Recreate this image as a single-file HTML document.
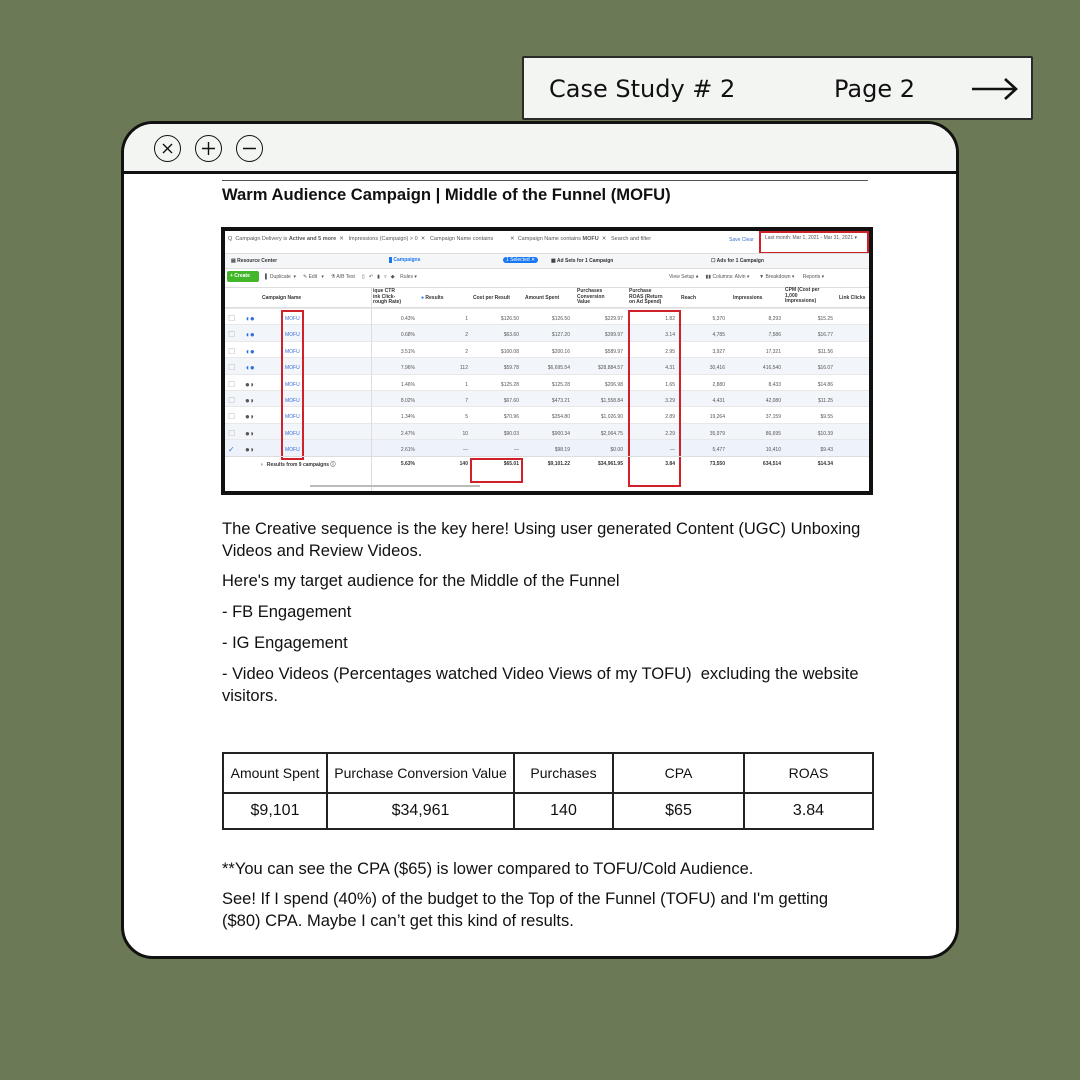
<!DOCTYPE html>
<html><head><meta charset="utf-8">
<style>
*{margin:0;padding:0;box-sizing:border-box}
body{width:1080px;height:1080px;background:#6b7956;position:relative;overflow:hidden;font-family:"Liberation Sans",Arial,sans-serif}
.hdr{position:absolute;left:522px;top:56px;width:511px;height:64px;background:#f3f5f3;border:2px solid #2a2a2a;border-radius:2px;font-family:"DejaVu Sans","Liberation Sans",sans-serif;font-size:24px;color:#111}
.hdr span{position:absolute;top:17px}
.win{position:absolute;left:121px;top:121px;width:838px;height:838px;background:#fff;border:3px solid #111;border-radius:32px;overflow:hidden}
.bar{position:absolute;left:0;top:0;width:100%;height:50px;background:#f3f5f3;border-bottom:3px solid #111}
.circ{position:absolute;top:11px;width:27px;height:27px;border:1.4px solid #111;border-radius:50%}
.t{position:absolute;font-size:16.5px;color:#111;line-height:22px;white-space:nowrap}
.ss{position:absolute;left:221px;top:227px;width:652px;height:268px;background:#111;padding:4px}
.in{position:relative;width:644px;height:260px;background:#fff;overflow:hidden;font-size:5px;color:#555}
.a{position:absolute;white-space:nowrap}
.row{position:absolute;left:0;width:644px;height:16.4px;border-top:1px solid #e8e8e8}
.red{position:absolute;border:2px solid #d0202a}
table.s{position:absolute;left:222px;top:752px;width:652px;border-collapse:collapse}
table.s td{border:2px solid #222;text-align:center;font-size:15px;color:#111}
</style></head><body>
<div class="hdr"><span style="left:25px">Case Study # 2</span><span style="left:310px">Page 2</span>
<svg style="position:absolute;left:446px;top:18px" width="50" height="26"><path d="M2 13H46M35 3L46 13L35 23" stroke="#111" stroke-width="2.6" fill="none"/></svg></div>
<div class="win">
<div class="bar">
<div class="circ" style="left:30px"><svg width="25" height="25"><path d="M8 8L17 17M17 8L8 17" stroke="#111" stroke-width="1.4"/></svg></div>
<div class="circ" style="left:71px"><svg width="25" height="25"><path d="M12.5 6V19M6 12.5H19" stroke="#111" stroke-width="1.4"/></svg></div>
<div class="circ" style="left:112px"><svg width="25" height="25"><path d="M6 12.5H19" stroke="#111" stroke-width="1.4"/></svg></div>
</div>
</div>
<div style="position:absolute;left:222px;top:180px;width:646px;height:1px;background:#555"></div>
<div class="t" style="left:222px;top:184px;font-weight:bold;font-size:16.6px">Warm Audience Campaign | Middle of the Funnel (MOFU)</div>

<div class="ss"><div class="in">
<div class="a" style="left:3px;top:5px;font-size:5.5px">Q&nbsp; Campaign Delivery is <b>Active and 5 more</b> &nbsp;✕ &nbsp; Impressions (Campaign) &gt; 0 &nbsp;✕ &nbsp; Campaign Name contains &nbsp; &nbsp; &nbsp; &nbsp; &nbsp; ✕ &nbsp;Campaign Name contains <b>MOFU</b> &nbsp;✕ &nbsp; Search and filter</div>
<div class="a" style="left:504px;top:6px;color:#3a6fd8">Save Clear</div>
<div class="red" style="left:534px;top:0px;width:110px;height:23px"></div>
<div class="a" style="left:540px;top:4px">Last month: Mar 1, 2021 - Mar 31, 2021 ▾</div>
<div style="position:absolute;left:0;top:22px;width:644px;height:16px;background:#f5f6f7;border-top:1px solid #ddd;border-bottom:1px solid #ddd"></div>
<div class="a" style="left:6px;top:27px;font-weight:bold;color:#333">▤ Resource Center</div>
<div class="a" style="left:164px;top:26px;font-weight:bold;color:#1877f2"><span style="background:#1877f2;color:#1877f2">■</span> Campaigns</div>
<div class="a" style="left:278px;top:26px;background:#1877f2;color:#fff;border-radius:4px;padding:0 3px">1 Selected ✕</div>
<div class="a" style="left:326px;top:27px;font-weight:bold;color:#333">▦ Ad Sets for 1 Campaign</div>
<div class="a" style="left:486px;top:27px;font-weight:bold;color:#333">☐ Ads for 1 Campaign</div>
<div class="a" style="left:2px;top:40px;width:32px;height:11px;background:#42b72a;border-radius:2px;color:#fff;font-weight:bold;line-height:11px;padding-left:3px">+ Create</div>
<div class="a" style="left:40px;top:43px">▌ Duplicate &nbsp;▾ &nbsp; &nbsp; ✎ Edit &nbsp; ▾ &nbsp; &nbsp; ⚗ A/B Test &nbsp; &nbsp; ▯ &nbsp; ↶ &nbsp; ▮ &nbsp; ▿ &nbsp; ◆ &nbsp; &nbsp;Rules ▾</div>
<div class="a" style="left:444px;top:43px">View Setup ● &nbsp; &nbsp; ▮▮ Columns: Alvin ▾ &nbsp; &nbsp; &nbsp; ▼ Breakdown ▾ &nbsp; &nbsp; &nbsp;Reports ▾</div>
<div style="position:absolute;left:0;top:56px;width:644px;height:21px;border-top:1px solid #ddd;border-bottom:1px solid #ddd"></div>
<div class="a" style="left:37px;top:64px;font-weight:bold;color:#333">Campaign Name</div>
<div class="a" style="left:148px;top:58px;font-weight:bold;color:#333;line-height:5.5px">ique CTR<br>ink Click-<br>rough Rate)</div>
<div class="a" style="left:196px;top:64px;font-weight:bold;color:#333"><span style="color:#1877f2">●</span> Results</div>
<div class="a" style="left:248px;top:64px;font-weight:bold;color:#333">Cost per Result</div>
<div class="a" style="left:300px;top:64px;font-weight:bold;color:#333">Amount Spent</div>
<div class="a" style="left:352px;top:58px;font-weight:bold;color:#333;line-height:5.5px">Purchases<br>Conversion<br>Value</div>
<div class="a" style="left:404px;top:58px;font-weight:bold;color:#333;line-height:5.5px">Purchase<br>ROAS (Return<br>on Ad Spend)</div>
<div class="a" style="left:456px;top:64px;font-weight:bold;color:#333">Reach</div>
<div class="a" style="left:508px;top:64px;font-weight:bold;color:#333">Impressions</div>
<div class="a" style="left:560px;top:57px;font-weight:bold;color:#333;line-height:5.5px">CPM (Cost per<br>1,000<br>Impressions)</div>
<div class="a" style="left:614px;top:64px;font-weight:bold;color:#333">Link Clicks</div>
<div class="row" style="top:77px"></div><div class="row" style="top:93.4px;background:#f2f5fa"></div><div class="row" style="top:109.8px"></div><div class="row" style="top:126.2px;background:#f2f5fa"></div><div class="row" style="top:142.6px"></div><div class="row" style="top:159px;background:#f2f5fa"></div><div class="row" style="top:175.4px"></div><div class="row" style="top:191.8px;background:#f2f5fa"></div><div class="row" style="top:208.2px;background:#eef3fb"></div>
<div style="position:absolute;left:146px;top:56px;width:1px;height:204px;background:#ddd"></div>
<div class="a" style="left:3px;top:80px;line-height:16.4px;color:#bbb;font-size:8px">☐<br>☐<br>☐<br>☐<br>☐<br>☐<br>☐<br>☐<br><span style="color:#3a6fd8">✓</span></div>
<div class="a" style="left:20px;top:80px;line-height:16.4px;font-size:8px;color:#2d6fe0">◖●<br>◖●<br>◖●<br>◖●<br><span style="color:#555">●◗</span><br><span style="color:#555">●◗</span><br><span style="color:#555">●◗</span><br><span style="color:#555">●◗</span><br><span style="color:#555">●◗</span></div>
<div class="a" style="left:60px;top:80px;line-height:16.4px;color:#3a6fd8">MOFU<br>MOFU<br>MOFU<br>MOFU<br>MOFU<br>MOFU<br>MOFU<br>MOFU<br>MOFU</div>
<div class="red" style="left:56px;top:79px;width:23px;height:150px"></div>
<div class="a" style="left:150px;width:40px;text-align:right;top:80px;line-height:16.4px">0.43%<br>0.68%<br>3.51%<br>7.96%<br>1.46%<br>8.02%<br>1.34%<br>2.47%<br>2.61%</div>
<div class="a" style="left:200px;width:43px;text-align:right;top:80px;line-height:16.4px">1<br>2<br>2<br>112<br>1<br>7<br>5<br>10<br>—</div>
<div class="a" style="left:250px;width:44px;text-align:right;top:80px;line-height:16.4px">$126.50<br>$63.60<br>$100.08<br>$59.78<br>$125.28<br>$67.60<br>$70.96<br>$90.03<br>—</div>
<div class="a" style="left:300px;width:45px;text-align:right;top:80px;line-height:16.4px">$126.50<br>$127.20<br>$200.16<br>$6,695.54<br>$125.28<br>$473.21<br>$354.80<br>$900.34<br>$98.19</div>
<div class="a" style="left:352px;width:46px;text-align:right;top:80px;line-height:16.4px">$229.97<br>$399.97<br>$589.97<br>$28,884.57<br>$206.98<br>$1,558.84<br>$1,026.90<br>$2,064.75<br>$0.00</div>
<div class="a" style="left:404px;width:46px;text-align:right;top:80px;line-height:16.4px">1.82<br>3.14<br>2.95<br>4.31<br>1.65<br>3.29<br>2.89<br>2.29<br>—</div>
<div class="red" style="left:403px;top:79px;width:53px;height:177px"></div>
<div class="a" style="left:456px;width:44px;text-align:right;top:80px;line-height:16.4px">5,370<br>4,785<br>3,927<br>30,416<br>2,880<br>4,431<br>19,264<br>35,979<br>5,477</div>
<div class="a" style="left:508px;width:48px;text-align:right;top:80px;line-height:16.4px">8,293<br>7,586<br>17,321<br>416,540<br>8,433<br>42,080<br>37,159<br>86,695<br>10,410</div>
<div class="a" style="left:560px;width:48px;text-align:right;top:80px;line-height:16.4px">$15.25<br>$16.77<br>$11.56<br>$16.07<br>$14.86<br>$11.25<br>$9.55<br>$10.39<br>$9.43</div>
<div style="position:absolute;left:0;top:225px;width:644px;height:1px;background:#ddd"></div>
<div class="a" style="left:36px;top:230px;font-weight:bold;color:#333">› &nbsp; Results from 9 campaigns ⓘ</div>
<div class="a" style="left:150px;width:40px;text-align:right;top:230px;font-weight:bold;color:#333">5.63%</div>
<div class="a" style="left:200px;width:43px;text-align:right;top:230px;font-weight:bold;color:#333">140</div>
<div class="a" style="left:250px;width:44px;text-align:right;top:230px;font-weight:bold;color:#333">$65.01</div>
<div class="red" style="left:245px;top:227px;width:53px;height:25px"></div>
<div class="a" style="left:300px;width:45px;text-align:right;top:230px;font-weight:bold;color:#333">$9,101.22</div>
<div class="a" style="left:352px;width:46px;text-align:right;top:230px;font-weight:bold;color:#333">$34,961.95</div>
<div class="a" style="left:404px;width:46px;text-align:right;top:230px;font-weight:bold;color:#333">3.84</div>
<div class="a" style="left:456px;width:44px;text-align:right;top:230px;font-weight:bold;color:#333">73,550</div>
<div class="a" style="left:508px;width:48px;text-align:right;top:230px;font-weight:bold;color:#333">634,514</div>
<div class="a" style="left:560px;width:48px;text-align:right;top:230px;font-weight:bold;color:#333">$14.34</div>
<div style="position:absolute;left:85px;top:254px;width:170px;height:2px;background:#bbb"></div>
</div></div>

<div class="t" style="left:222px;top:518px">The Creative sequence is the key here! Using user generated Content (UGC) Unboxing</div>
<div class="t" style="left:222px;top:540px">Videos and Review Videos.</div>
<div class="t" style="left:222px;top:570px">Here's my target audience for the Middle of the Funnel</div>
<div class="t" style="left:222px;top:601px">- FB Engagement</div>
<div class="t" style="left:222px;top:632px">- IG Engagement</div>
<div class="t" style="left:222px;top:663px">- Video Videos (Percentages watched Video Views of my TOFU)&nbsp; excluding the website</div>
<div class="t" style="left:222px;top:685px">visitors.</div>

<table class="s">
<tr style="height:40px"><td style="width:104px;font-size:14px">Amount Spent</td><td style="width:187px;font-size:14px">Purchase Conversion Value</td><td style="width:99px;font-size:14px">Purchases</td><td style="width:131px;font-size:14px">CPA</td><td style="font-size:14px">ROAS</td></tr>
<tr style="height:36px"><td style="font-size:16px">$9,101</td><td style="font-size:16px">$34,961</td><td style="font-size:16px">140</td><td style="font-size:16px">$65</td><td style="font-size:16px">3.84</td></tr>
</table>

<div class="t" style="left:222px;top:858px">**You can see the CPA ($65) is lower compared to TOFU/Cold Audience.</div>
<div class="t" style="left:222px;top:888px">See! If I spend (40%) of the budget to the Top of the Funnel (TOFU) and I'm getting</div>
<div class="t" style="left:222px;top:910px">($80) CPA. Maybe I can’t get this kind of results.</div>
</body></html>
